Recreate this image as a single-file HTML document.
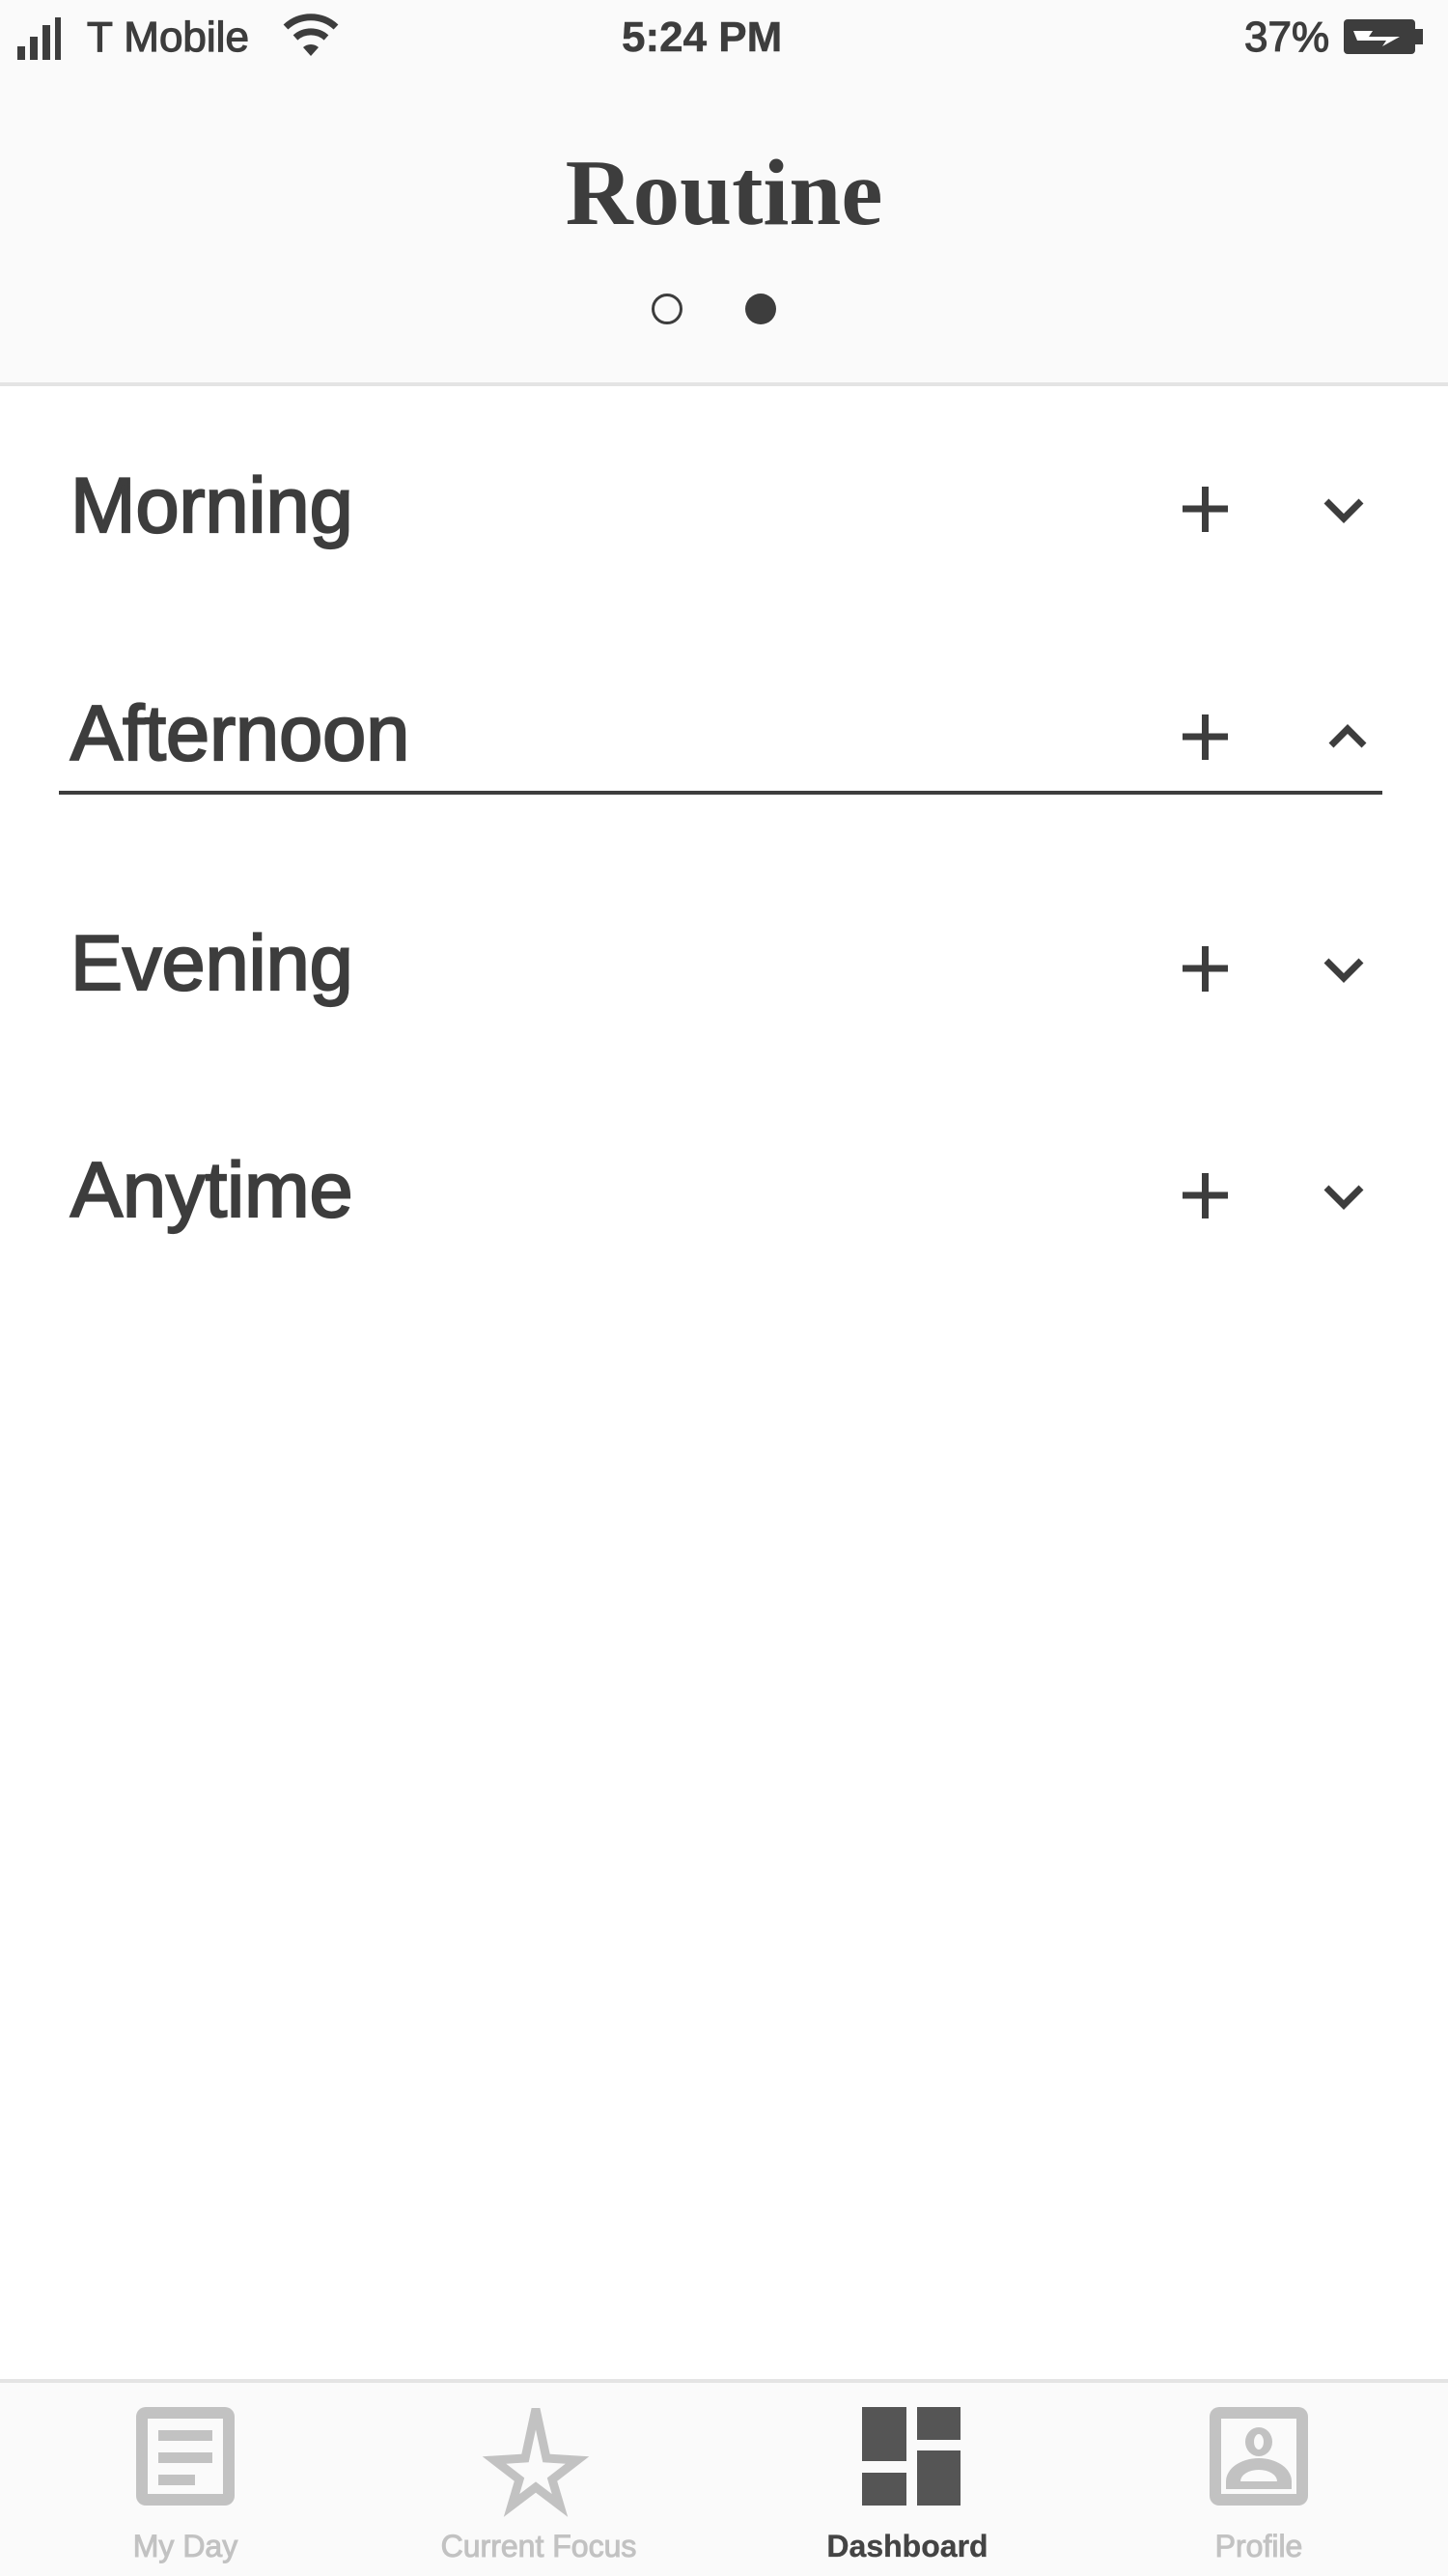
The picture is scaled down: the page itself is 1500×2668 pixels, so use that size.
<!DOCTYPE html>
<html><head><meta charset="utf-8"><style>
*{margin:0;padding:0;box-sizing:border-box}
html,body{width:1500px;height:2668px;overflow:hidden;background:#fff;font-family:"Liberation Sans",sans-serif;color:#3d3d3d}
.abs{position:absolute}
#hdr{position:absolute;left:0;top:0;width:1500px;height:400px;background:#fafafa;border-bottom:4px solid #e4e4e4}
.st{position:absolute;top:12px;font-size:44px;line-height:54px;color:#3d3d3d;-webkit-text-stroke:1.2px #3d3d3d}
.title{position:absolute;left:0;width:1500px;top:140px;text-align:center;font-family:"Liberation Serif",serif;font-weight:bold;font-size:97px;line-height:120px;color:#3d3d3d}
.row{position:absolute;left:73px;font-size:81px;line-height:100px;-webkit-text-stroke:2.2px #3d3d3d;color:#3d3d3d}
#nav{position:absolute;left:0;top:2464px;width:1500px;height:204px;background:#fafafa;border-top:4px solid #e4e4e4}
.lab{position:absolute;top:2617px;font-size:32px;line-height:40px;text-align:center;width:300px;color:#c2c2c2;-webkit-text-stroke:1px #c2c2c2}
</style></head><body>
<div id="hdr"></div>
<svg class="abs" style="left:18px;top:18px" width="60" height="44"><rect x="0" y="30" width="8" height="14" fill="#3d3d3d"/><rect x="13" y="20" width="8" height="24" fill="#3d3d3d"/><rect x="26" y="8" width="8" height="36" fill="#3d3d3d"/><rect x="39" y="0" width="6" height="44" fill="#3d3d3d"/></svg>
<div class="st" style="left:90px">T Mobile</div>
<svg class="abs" style="left:292px;top:14px" width="60" height="46" viewBox="0 0 60 46"><path d="M4 14 A38 38 0 0 1 56 14" stroke="#3d3d3d" stroke-width="7" fill="none"/><path d="M14 25 A24 24 0 0 1 46 25" stroke="#3d3d3d" stroke-width="7" fill="none"/><path d="M22 35 L30 44 L38 35 A12 12 0 0 0 22 35Z" fill="#3d3d3d"/></svg>
<div class="st" style="left:644px;font-weight:bold;-webkit-text-stroke:0.5px #3d3d3d">5:24 PM</div>
<div class="st" style="left:1289px">37%</div>
<svg class="abs" style="left:1392px;top:20px" width="84" height="36"><rect x="0" y="0" width="74" height="36" rx="4" fill="#3d3d3d"/><rect x="74" y="10" width="8" height="16" fill="#3d3d3d"/><path d="M10 12 L30 12 L26 18 L58 18 L40 28 L44 22 L14 22Z" fill="#fff"/></svg>
<div class="title">Routine</div>
<svg class="abs" style="left:660px;top:290px" width="160" height="60"><circle cx="31" cy="30" r="14.5" fill="none" stroke="#3d3d3d" stroke-width="3"/><circle cx="128" cy="30" r="16" fill="#3d3d3d"/></svg>

<div class="row" style="top:474px">Morning</div>
<div class="row" style="top:710px">Afternoon</div>
<div class="row" style="top:948px">Evening</div>
<div class="row" style="top:1183px">Anytime</div>
<div class="abs" style="left:61px;top:819px;width:1371px;height:4px;background:#3d3d3d"></div>

<svg class="abs" style="left:0;top:0" width="1500" height="1300">
<g stroke="#3d3d3d" stroke-width="7" fill="none">
<path d="M1225 527H1272M1248.5 504V551"/><path d="M1374 519L1392 537L1410 519"/>
<path d="M1225 763H1272M1248.5 740V787"/><path d="M1379 772L1396 755L1413 772"/>
<path d="M1225 1003H1272M1248.5 980V1027"/><path d="M1374 995L1392 1013L1410 995"/>
<path d="M1225 1238H1272M1248.5 1215V1262"/><path d="M1374 1230L1392 1248L1410 1230"/>
</g></svg>

<div id="nav"></div>
<svg class="abs" style="left:0;top:2480px" width="1500" height="130">
<g fill="#c2c2c2">
<rect x="141" y="13" width="102" height="102" rx="10"/>
<rect x="153" y="25" width="78" height="78" fill="#fafafa"/>
<rect x="164" y="37" width="56" height="11"/><rect x="164" y="60" width="56" height="11"/><rect x="164" y="83" width="38" height="11"/>
<rect x="1253" y="13" width="102" height="102" rx="10"/>
<rect x="1265" y="25" width="78" height="78" fill="#fafafa"/>
<ellipse cx="1304" cy="49" rx="14" ry="15"/><ellipse cx="1304" cy="49" rx="5" ry="8" fill="#fafafa"/>
<path d="M1270 98 V90 A34 24 0 0 1 1338 90 V98Z"/><path d="M1285 90 A19 12 0 0 1 1323 90Z" fill="#fafafa"/>
</g>
<path d="M555 15 L566 66 L598 68 L572 88 L580 115 L555 96 L530 115 L538 88 L512 68 L544 66Z" fill="none" stroke="#c2c2c2" stroke-width="9" stroke-linejoin="miter"/>
<g fill="#555">
<rect x="893" y="13" width="46" height="56"/><rect x="893" y="81" width="46" height="34"/>
<rect x="950" y="13" width="45" height="34"/><rect x="950" y="58" width="45" height="57"/>
</g>
</svg>
<div class="lab" style="left:42px">My Day</div>
<div class="lab" style="left:408px">Current Focus</div>
<div class="lab" style="left:790px;color:#444;-webkit-text-stroke:0.3px #444;font-weight:bold">Dashboard</div>
<div class="lab" style="left:1154px">Profile</div>
</body></html>
